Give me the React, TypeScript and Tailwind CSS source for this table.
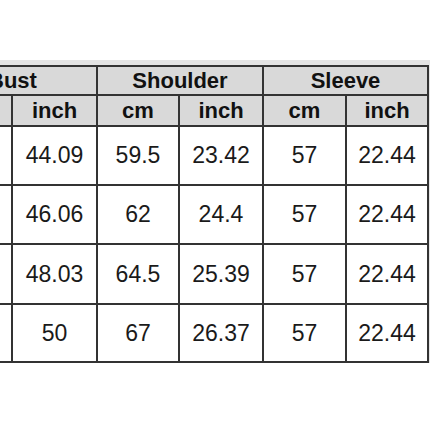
const groups = ["Bust", "Shoulder", "Sleeve"];

const rows = [
  ["112", "44.09", "59.5", "23.42", "57", "22.44"],
  ["117", "46.06", "62", "24.4", "57", "22.44"],
  ["122", "48.03", "64.5", "25.39", "57", "22.44"],
  ["127", "50", "67", "26.37", "57", "22.44"],
];

const rowHeights = ["h-[57px]", "h-[57px]", "h-[58px]", "h-[56px]"];

export default function App() {
  return (
    <div className="h-[430px] w-[430px] overflow-hidden bg-white" style={{ fontFamily: '"Liberation Sans", Arial, sans-serif' }}>
      <div className="mt-[60px] ml-[-73px] w-[504px] bg-[#e4e4e4] pt-[5px]">
        <div className="grid w-[502px] grid-cols-[82px_83px_80px_82px_81px_80px] gap-[2px] bg-[#333333] p-[2px]">
          {/* Group headers */}
          {groups.map((g) => (
            <div
              key={g}
              className="col-span-2 flex h-[27px] items-center justify-center bg-[#d9d9d9] text-[22px] font-bold text-[#111]"
            >
              {g}
            </div>
          ))}

          {/* Unit headers */}
          {groups.map((g) => [
            <div key={g + "cm"} className="flex h-[29px] items-center justify-center bg-[#d9d9d9] text-[22px] font-bold text-[#111]">
              cm
            </div>,
            <div key={g + "in"} className="flex h-[29px] items-center justify-center bg-[#d9d9d9] text-[22px] font-bold text-[#111]">
              inch
            </div>,
          ])}

          {/* Body */}
          {rows.map((r, i) =>
            r.map((v, j) => (
              <div
                key={i + "-" + j}
                className={`flex ${rowHeights[i]} items-center justify-center bg-white text-[23px] text-[#1a1a1a]`}
              >
                {v}
              </div>
            ))
          )}
        </div>
      </div>
    </div>
  );
}
